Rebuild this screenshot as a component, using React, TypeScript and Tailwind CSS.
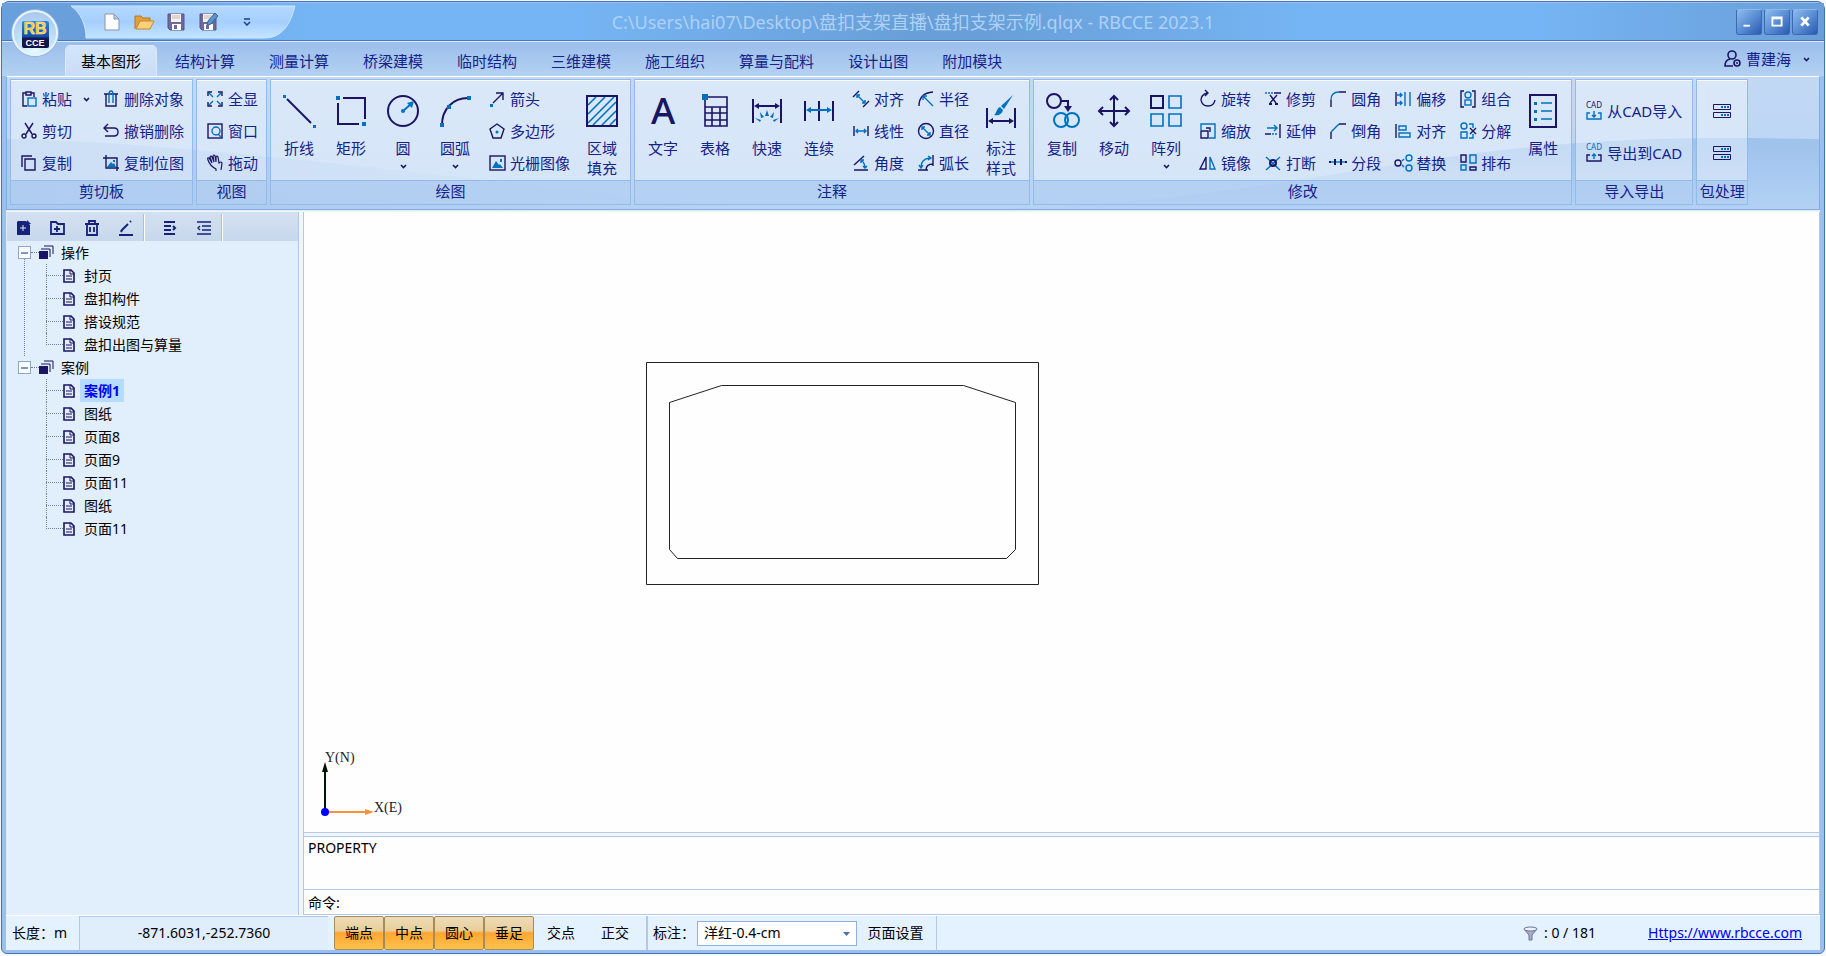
import React, { useState } from 'react';
import type { FC, ReactNode } from 'react';

const D = '#1b1464';
const B = '#0071c1';

// 32x32 drawings for the tall ribbon buttons
const bigIcons: Record<string, ReactNode> = {
  polyline: (
    <>
      <path d="M4 4 28 28" stroke={D} strokeWidth="2" />
      <path d="M0 0h3v3H0zM30 30h3v3h-3z" fill={B} />
    </>
  ),
  rect: (
    <>
      <path d="M8 3H30V24M3 8V29H24" stroke={D} strokeWidth="2" />
      <path d="M1 1h4v4H1zM27 27h4v4h-4z" fill={B} />
    </>
  ),
  circle: (
    <>
      <circle cx="16" cy="16" r="15" stroke={D} strokeWidth="2" />
      <path d="M16 16 24 9" stroke={B} strokeWidth="2" />
      <circle cx="16" cy="16" r="2" fill={B} />
      <path d="M27 6 20 8l5 5z" fill={B} />
    </>
  ),
  arc: (
    <>
      <path d="M3 30C3 14 14 3 29 3" stroke={D} strokeWidth="2" />
      <path d="M1 28h4v4H1zM8 10h4v4H8zM28 1h4v4h-4z" fill={B} />
    </>
  ),
  hatch: (
    <>
      <path d="M2 10 10 2M2 19 19 2M2 28 28 2M7 30 30 7M16 30 30 16M24 30 30 24" stroke={B} strokeWidth="1.6" />
      <rect x="1" y="1" width="30" height="30" stroke={D} strokeWidth="2" />
    </>
  ),
  text: (
    <text x="16" y="29" textAnchor="middle" fill={D} className="font-['Noto_Sans'] text-[37px] font-medium">A</text>
  ),
  table: (
    <>
      <path d="M6 2H28V31H6ZM6 12H28M6 18H28M6 25H28M13 12V31M21 12V31" stroke={D} strokeWidth="1.6" />
      <path d="M3 -1h6v6H3z" fill={B} />
    </>
  ),
  quick: (
    <>
      <path d="M2 4V28M30 4V28M5 11H27" stroke={D} strokeWidth="2" />
      <path d="M3 11 8 8v6zM29 11 24 8v6z" fill={D} />
      <path d="M16 15 18 21H14zM9 17 13 22 10 23zM23 17 19 22 22 23zM4 23 10 25 9 27zM28 23 22 25 23 27z" fill={B} />
    </>
  ),
  continuous: (
    <>
      <path d="M2 6V26M16 6V26M30 6V26" stroke={D} strokeWidth="2" />
      <path d="M5 15H27" stroke={B} strokeWidth="2" />
      <path d="M3 15 8 12v6zM29 15 24 12v6z" fill={B} />
    </>
  ),
  dimStyle: (
    <>
      <path d="M2 13V33M30 13V33M5 26H27" stroke={D} strokeWidth="2" />
      <path d="M3 26 8 23v6zM29 26 24 23v6z" fill={D} />
      <path d="M28 0 16 11 19 14zM15 12 18 15C17 19 14 21 9 20 12 18 11 14 15 12z" fill={B} />
    </>
  ),
  copy: (
    <>
      <circle cx="8" cy="6" r="7" stroke={D} strokeWidth="2" />
      <path d="M15 6H22V14" stroke={D} strokeWidth="2" />
      <path d="M18 11 22 17 26 11z" fill={D} />
      <circle cx="15" cy="25" r="7" stroke={B} strokeWidth="2" />
      <circle cx="26" cy="25" r="7" stroke={B} strokeWidth="2" />
    </>
  ),
  move: (
    <path d="M16 1V31M1 16H31M12 5 16 1 20 5M12 27 16 31 20 27M5 12 1 16 5 20M27 12 31 16 27 20" stroke={D} strokeWidth="2" />
  ),
  array: (
    <>
      <rect x="1" y="1" width="12" height="12" stroke={D} strokeWidth="2" />
      <path d="M19 1H31V13H19ZM1 19H13V31H1ZM19 19H31V31H19Z" stroke={B} strokeWidth="1.6" />
    </>
  ),
  props: (
    <>
      <rect x="3" y="0" width="26" height="32" stroke={D} strokeWidth="2" />
      <path d="M14 8H25M14 16H25M14 24H25" stroke={B} strokeWidth="1.6" />
      <path d="M7 7h3v3H7zM7 15h3v3H7zM7 23h3v3H7z" fill={B} />
    </>
  ),
};

// 16x16 drawings for the small ribbon buttons
const smallIcons: Record<string, ReactNode> = {
  paste: (
    <>
      <path d="M5 2H2V15H6M10 2H13V6M5 1H10V4H5Z" stroke={D} />
      <rect x="7" y="7" width="8" height="8" stroke={B} />
    </>
  ),
  cut: (
    <>
      <path d="M4 0 11 11M12 0 5 11" stroke={D} />
      <circle cx="3" cy="13" r="2" stroke={D} />
      <circle cx="13" cy="13" r="2" stroke={D} />
    </>
  ),
  copy: <path d="M4 4H14V15H4ZM1 12V1H11" stroke={D} />,
  trash: (
    <>
      <path d="M1 3H15M3 3V15H13V3" stroke={D} />
      <path d="M6 12V3Q6 0 8 0 10 0 10 3V12" stroke={B} />
    </>
  ),
  undo: <path d="M5 1 1 5 5 9M1 5H11Q15 5 15 9 15 13 11 13H2" stroke={D} />,
  bitmap: (
    <>
      <path d="M3 0V13H16M0 3H14V16" stroke={D} />
      <path d="M4 12 8 7 10 9 11 8 13 12zM10 5h2v2h-2z" fill={B} />
    </>
  ),
  fullView: (
    <>
      <path d="M1 5V1H5M15 11V15H11M15 5V1H11M1 11V15H5" stroke={D} />
      <path d="M2 2 6 6M14 14 10 10M14 2 10 6M2 14 6 10" stroke={B} />
    </>
  ),
  window: (
    <>
      <rect x="1" y="1" width="14" height="14" stroke={D} />
      <circle cx="9" cy="8" r="4" stroke={B} />
      <path d="M11 11 14 14" stroke={B} />
    </>
  ),
  hand: (
    <path d="M9 16V14Q3 11 1 5 0 2 2 3L5 8 3 2Q4 0 5 2L7 7 6 1Q7 -1 8 1L9 7 9 2Q10 0 11 2L12 8Q14 6 15 8L14 15" stroke={D} strokeWidth="1.2" />
  ),
  arrow: (
    <>
      <path d="M4 12 14 2M7 2H14V9" stroke={D} />
      <path d="M1 13h3v3H1z" fill={B} />
    </>
  ),
  polygon: (
    <>
      <path d="M8 1 15 6 12 15H4L1 6Z" stroke={D} />
      <circle cx="8" cy="9" r="1.5" fill={B} />
    </>
  ),
  raster: (
    <>
      <rect x="1" y="1" width="15" height="14" stroke={D} />
      <path d="M3 13 7 6 10 10 11 9 14 13zM11 4h2v3h-2z" fill={B} />
    </>
  ),
  aligned: (
    <>
      <path d="M0 6 6 0M10 16 16 10" stroke={D} />
      <path d="M4 4 12 12M4 7V4H7M12 9V12H9" stroke={B} />
    </>
  ),
  linear: (
    <>
      <path d="M1 3V13M15 3V13" stroke={D} />
      <path d="M3 8H13M5 6 3 8 5 10M11 6 13 8 11 10" stroke={B} />
    </>
  ),
  angle: (
    <>
      <path d="M1 10 11 1M1 15H15" stroke={D} />
      <path d="M8 5Q12 8 12 13M8 8V5H11M10 11 12 13 14 11" stroke={B} />
    </>
  ),
  radius: (
    <>
      <path d="M1 15Q1 2 15 1" stroke={D} />
      <path d="M5 5 15 15M5 9V5H9" stroke={B} />
    </>
  ),
  diameter: (
    <>
      <circle cx="8" cy="8" r="7.5" stroke={D} />
      <path d="M4 4 12 12M4 7V4H7M12 9V12H9" stroke={B} />
    </>
  ),
  arcLen: (
    <>
      <path d="M0 15H6M6 15H10M8 15Q8 9 15 9M15 0V11" stroke={D} />
      <path d="M3 12Q3 4 12 3M1 10 3 13 5 10M10 1 13 3 10 5" stroke={B} />
    </>
  ),
  rotate: <path d="M7 2Q1 4 1 9 2 15 8 15 14 15 15 9M5 -1 8 2 5 5" stroke={D} />,
  scale: (
    <>
      <path d="M1 7V1H15V15H9" stroke={B} />
      <path d="M1 8H8V15H1ZM6 5H10V9" stroke={D} />
    </>
  ),
  mirror: (
    <>
      <path d="M6 2V14H0Z" stroke={D} />
      <path d="M10 2V14H15Z" stroke={B} />
    </>
  ),
  trim: (
    <>
      <path d="M0 2H8" stroke={B} strokeDasharray="2 1" />
      <path d="M9 2H16M5 4 11 12M12 4 5 12" stroke={D} />
      <path d="M4 12h3v2H4zM10 12h3v2h-3z" fill={D} />
    </>
  ),
  extend: (
    <>
      <path d="M15 1V15M0 11H6" stroke={D} />
      <path d="M2 5H12M9 2 12 5 9 8" stroke={B} />
      <path d="M7 11H13" stroke={B} strokeDasharray="2 1" />
    </>
  ),
  breakIt: (
    <>
      <path d="M1 2 15 15M15 2 1 15" stroke={B} />
      <circle cx="8" cy="8" r="3" stroke={D} strokeWidth="2" />
    </>
  ),
  fillet: (
    <>
      <path d="M1 9Q1 1 9 1" stroke={B} />
      <path d="M1 9V16M9 1H16" stroke={D} />
    </>
  ),
  chamfer: (
    <>
      <path d="M1 9 9 1" stroke={B} />
      <path d="M1 9V16M9 1H16" stroke={D} />
    </>
  ),
  segment: (
    <>
      <path d="M1 7H15" stroke={B} />
      <path d="M-1 7H1M5 4V10M11 4V10M15 7H17" stroke={D} strokeWidth="2" />
    </>
  ),
  offset: (
    <>
      <path d="M1 1V15" stroke={D} />
      <path d="M10 1V15M15 1V15M2 4H7M5 2 7 4 5 6M2 12H7M5 10 7 12 5 14" stroke={B} />
    </>
  ),
  align: (
    <>
      <path d="M1 1V15" stroke={D} />
      <path d="M4 3H11V7H4ZM4 10H15V14H4Z" stroke={B} />
    </>
  ),
  replace: (
    <>
      <circle cx="3" cy="8" r="3" stroke={D} />
      <circle cx="14" cy="3" r="3" stroke={B} />
      <circle cx="14" cy="13" r="3" stroke={B} />
      <path d="M7 6 9 4M7 10 9 12" stroke={B} />
    </>
  ),
  group: (
    <>
      <path d="M4 0H1V16H4M12 0H15V16H12" stroke={D} />
      <circle cx="8" cy="4" r="3" stroke={B} />
      <rect x="5" y="9" width="6" height="5" stroke={B} />
    </>
  ),
  ungroup: (
    <>
      <circle cx="4" cy="3" r="3" stroke={B} />
      <path d="M1 9H7V15H1ZM9 1H13V5M9 15H13V11" stroke={B} />
      <path d="M10 5 16 11M16 5 10 11" stroke={D} />
    </>
  ),
  arrange: (
    <>
      <path d="M1 0H6V7H1ZM10 12H16V15H10Z" stroke={D} />
      <path d="M10 0H16V8H10ZM1 10H6V15H1Z" stroke={B} />
    </>
  ),
  cadIn: (
    <>
      <text x="8" y="5" textAnchor="middle" fill={D} className="font-['Noto_Sans'] text-[8px]">CAD</text>
      <path d="M4 10H1V16H15V10H12M8 8V14M6 12 8 14 10 12" stroke={B} />
    </>
  ),
  cadOut: (
    <>
      <text x="8" y="5" textAnchor="middle" fill={B} className="font-['Noto_Sans'] text-[8px]">CAD</text>
      <path d="M4 10H1V16H15V10H12" stroke={D} />
      <path d="M8 14V9M6 11 8 9 10 11" stroke={B} />
    </>
  ),
  pack: (
    <>
      <path d="M0.5 1.5H17.5V6.5H0.5ZM0.5 9.5H17.5V14.5H0.5Z" stroke={D} strokeWidth="1" />
      <path d="M8 3h2v2H8zM11 3h2v2h-2zM14 3h2v2h-2zM8 11h2v2H8zM11 11h2v2h-2zM14 11h2v2h-2z" fill={B} />
    </>
  ),
};

const Chevron: FC = () => (
  <svg width="7" height="5" viewBox="0 0 7 5" fill="none" className="shrink-0">
    <path d="M1 1 3.5 3.5 6 1" stroke={D} strokeWidth="1.6" />
  </svg>
);

const BigButton: FC<{ icon: string; label: string; label2?: string; menu?: boolean }> = ({ icon, label, label2, menu }) => (
  <button className="flex w-[52px] flex-col items-center pt-[14px]">
    <svg width="32" height="32" viewBox="0 0 32 32" fill="none" className="mb-[11px] overflow-visible">{bigIcons[icon]}</svg>
    <span className="leading-5">{label}</span>
    {label2 && <span className="leading-5">{label2}</span>}
    {menu && <span className="pt-1.5"><Chevron /></span>}
  </button>
);

const SmallButton: FC<{ icon: string; label: string; menu?: boolean }> = ({ icon, label, menu }) => (
  <button className="flex h-8 items-center gap-[5px] whitespace-nowrap">
    <svg width="16" height="16" viewBox="0 0 16 16" fill="none" strokeWidth="1.4" className="shrink-0 overflow-visible">{smallIcons[icon]}</svg>
    <span>{label}</span>
    {menu && <span className="ml-1.5"><Chevron /></span>}
  </button>
);

const Columns: FC<{ columns: [string, string][][] }> = ({ columns }) => (
  <div className="flex gap-3.5 pt-0.5 pr-1.5 pl-2">
    {columns.map((col, i) => (
      <div key={i} className="flex flex-col">
        {col.map(([icon, label]) => <SmallButton key={label} icon={icon} label={label} />)}
      </div>
    ))}
  </div>
);

const Group: FC<{ title: string; className?: string; children: ReactNode }> = ({ title, className = '', children }) => (
  <section className="flex h-[126px] flex-col border border-[#93bae9] bg-white/40">
    <div className={`flex h-[100px] border-t border-white/80 ${className}`}>{children}</div>
    <h2 className="flex-1 border-t border-[#93bae9] bg-[#8db8ea]/45 text-center leading-[21px] whitespace-nowrap">{title}</h2>
  </section>
);

const tabs = ['基本图形', '结构计算', '测量计算', '桥梁建模', '临时结构', '三维建模', '施工组织', '算量与配料', '设计出图', '附加模块'];

const tree = [
  { name: '操作', pages: ['封页', '盘扣构件', '搭设规范', '盘扣出图与算量'] },
  { name: '案例', pages: ['案例1', '图纸', '页面8', '页面9', '页面11', '图纸', '页面11'] },
];

const Logo: FC = () => (
  <button aria-label="RBCCE" className="absolute top-1.5 left-2 z-10">
    <svg width="50" height="50" viewBox="0 0 50 50">
      <defs>
        <radialGradient id="orb" cx="50%" cy="85%" r="85%">
          <stop offset="0" stopColor="#e6fbff" />
          <stop offset="0.5" stopColor="#bfe0fb" />
          <stop offset="1" stopColor="#a5c4ea" />
        </radialGradient>
        <linearGradient id="badge" x1="0" y1="0" x2="0" y2="1">
          <stop offset="0" stopColor="#2a86dd" />
          <stop offset="0.6" stopColor="#0f4da0" />
          <stop offset="0.62" stopColor="#191a55" />
          <stop offset="1" stopColor="#111246" />
        </linearGradient>
      </defs>
      <circle cx="25" cy="25" r="23.5" fill="url(#orb)" stroke="#8fb3df" />
      <circle cx="25" cy="25" r="22" fill="none" stroke="#e8f4ff" strokeWidth="2" />
      <rect x="12" y="13" width="27" height="27" rx="2" fill="url(#badge)" />
      <text x="25" y="26" textAnchor="middle" fill="#ffc425" stroke="#fff3cf" strokeWidth="0.5" className="font-['Liberation_Sans'] text-[16px] font-bold">RB</text>
      <text x="25" y="38" textAnchor="middle" fill="#ffffff" className="font-['Liberation_Sans'] text-[9px] font-bold">CCE</text>
    </svg>
  </button>
);

const floppy = (
  <>
    <path d="M1 1H17V17H3L1 15Z" fill="#6d6a9b" stroke="#57548a" />
    <path d="M4 1h10v8H4z" fill="#f4f1ee" />
    <path d="M5 3H13M5 5H13" stroke="#c9b9a7" />
    <path d="M5 11h9v6H5z" fill="#fff" />
    <path d="M7 12h3v4H7z" fill="#6d6a9b" />
  </>
);

const quickAccess: { name: string; art: ReactNode }[] = [
  { name: '新建', art: <path d="M2 1H11L16 6V17H2ZM11 1V6H16" fill="#fdfdff" stroke="#8f93a6" /> },
  {
    name: '打开',
    art: (
      <>
        <path d="M0 16V3H6L8 5H15V8" fill="#e0a13c" stroke="#b5771e" />
        <path d="M1 16 5 8H19L15 16Z" fill="#ffd07a" stroke="#c9862a" />
      </>
    ),
  },
  { name: '保存', art: floppy },
  { name: '另存为', art: <>{floppy}<path d="M8 12 9 8 16 0 19 3 12 11Z" fill="#5b93cf" stroke="#33659f" /></> },
];

const TitleBar: FC = () => (
  <header className="relative flex h-[38px] shrink-0 items-center border-b border-[#4a74bb] bg-[#689fd8]">
    <div className="absolute inset-0 bg-[linear-gradient(to_right,#699fda_0%,#699fda_5%,#76b5f5_17%,#76b5f5_31%,#689fd8_50%,#689fd8_54%,#76b5f5_72%,#76b5f5_84%,#699ed8_100%)]" />
    <svg width="226" height="34" viewBox="0 0 226 34" className="absolute top-0.5 left-[68px]">
      <defs>
        <linearGradient id="qat" x1="0" y1="0" x2="0" y2="1">
          <stop offset="0" stopColor="#b5d9ff" />
          <stop offset="0.5" stopColor="#a5cfff" />
          <stop offset="1" stopColor="#c3e4ff" />
        </linearGradient>
      </defs>
      <path d="M1 1H225C220 20 212 33 194 33H16C16 20 11 8 1 1Z" fill="url(#qat)" stroke="#cfe6ff" />
    </svg>
    <nav className="relative flex w-[295px] shrink-0 items-center gap-3.5 pl-[101px]">
      {quickAccess.map(({ name, art }) => (
        <button key={name} aria-label={name}>
          <svg width="18" height="18" viewBox="0 0 18 18" fill="none" className="overflow-visible">{art}</svg>
        </button>
      ))}
      <button aria-label="自定义快速访问工具栏" className="ml-3">
        <svg width="8" height="8" viewBox="0 0 8 8" fill="none">
          <path d="M1 1H7M1 4 4 7 7 4" stroke="#1c3c8c" strokeWidth="1.5" />
        </svg>
      </button>
    </nav>
    <h1 className="relative flex-1 text-center text-lg whitespace-nowrap text-[#aed1f6]">
      C:\Users\hai07\Desktop\盘扣支架直播\盘扣支架示例.qlqx - RBCCE 2023.1
    </h1>
    <div className="relative flex w-[295px] shrink-0 justify-end gap-0.5 pr-1.5">
      {[
        ['最小化', 'M7 17H14'],
        ['最大化', 'M8 8H18V17H8ZM8 9H18'],
        ['关闭', 'M9 8 17 17M17 8 9 17'],
      ].map(([name, d]) => (
        <button key={name} aria-label={name} className="h-[26px] w-[26px] rounded-[3px] border border-[#3c68b4] border-t-[#8fb9ea] bg-linear-to-br from-[#8ebcf0] via-[#5b8fd4] to-[#2a59b2]">
          <svg width="24" height="24" viewBox="0 0 26 26" fill="none">
            <path d={d} stroke="#fff" strokeWidth={name === '关闭' ? 3 : 2} />
          </svg>
        </button>
      ))}
    </div>
  </header>
);

const TabRow: FC = () => {
  const [active, setActive] = useState(tabs[0]);
  return (
    <div className="flex h-[35px] shrink-0 items-end justify-between border-t border-[#dcebfb] bg-linear-to-b from-[#9abeeb] to-[#b4d1f2] px-1 text-[15px] text-[#15228a]">
      <div className="flex gap-1 pl-[60px]" role="tablist">
        {tabs.map(tab => (
          <button
            key={tab}
            role="tab"
            aria-selected={tab === active}
            onClick={() => setActive(tab)}
            className={`h-[30px] px-[15px] leading-[30px] whitespace-nowrap ${tab === active ? 'rounded-t-sm bg-linear-to-b from-[#d3e5fa] to-[#c9ddf6] text-black shadow-[0_0_0_1px_#dcebfc]' : ''}`}
          >
            {tab}
          </button>
        ))}
      </div>
      <button className="flex h-[34px] items-center gap-1 pr-2.5">
        <svg width="18" height="18" viewBox="0 0 18 18" fill="none" strokeWidth="1.6">
          <circle cx="8" cy="5" r="4" stroke={D} />
          <path d="M9 16H1Q1 10 6 9" stroke={D} />
          <circle cx="13" cy="13" r="3" stroke={D} />
          <circle cx="13" cy="13" r="1" fill={D} />
        </svg>
        <span>曹建海</span>
        <span className="ml-2"><Chevron /></span>
      </button>
    </div>
  );
};

const Ribbon: FC = () => (
  <div className="relative flex h-[134px] shrink-0 border border-[#84ace0] border-t-white bg-linear-to-b from-[#c2d9f5] to-[#b7d3f3] px-[3px] pt-0.5 text-[15px] text-[#15228a]">
    {/* glossy swoosh under the groups */}
    <svg className="absolute inset-0 h-full w-full" viewBox="0 0 1812 132" preserveAspectRatio="none">
      <defs>
        <linearGradient id="swoosh" x1="0" y1="0" x2="0" y2="1">
          <stop offset="0.1" stopColor="#94bbea" />
          <stop offset="1" stopColor="#b0d0f4" />
        </linearGradient>
        <linearGradient id="swooshFade" x1="0" y1="0" x2="1" y2="0">
          <stop offset="0" stopColor="#a3c5ee" stopOpacity="0.7" />
          <stop offset="0.6" stopColor="#a3c5ee" stopOpacity="0.3" />
          <stop offset="1" stopColor="#a3c5ee" stopOpacity="0" />
        </linearGradient>
      </defs>
      <path d="M0 62C200 66 400 98 760 132H0Z" fill="url(#swooshFade)" />
      <path d="M1000 132C1200 124 1320 96 1470 76 1600 60 1700 60 1812 62V132Z" fill="url(#swoosh)" opacity="0.7" />
    </svg>
    <div className="relative flex items-start gap-[3px]">
      <Group title="剪切板" className="gap-[13px] pt-0.5 pr-2 pl-2.5">
        <div>
          <SmallButton icon="paste" label="粘贴" menu />
          <SmallButton icon="cut" label="剪切" />
          <SmallButton icon="copy" label="复制" />
        </div>
        <div>
          <SmallButton icon="trash" label="删除对象" />
          <SmallButton icon="undo" label="撤销删除" />
          <SmallButton icon="bitmap" label="复制位图" />
        </div>
      </Group>
      <Group title="视图" className="flex-col pt-0.5 pr-2 pl-2.5">
        <SmallButton icon="fullView" label="全显" />
        <SmallButton icon="window" label="窗口" />
        <SmallButton icon="hand" label="拖动" />
      </Group>
      <Group title="绘图" className="px-0.5">
        <BigButton icon="polyline" label="折线" />
        <BigButton icon="rect" label="矩形" />
        <BigButton icon="circle" label="圆" menu />
        <BigButton icon="arc" label="圆弧" menu />
        <Columns columns={[[['arrow', '箭头'], ['polygon', '多边形'], ['raster', '光栅图像']]]} />
        <BigButton icon="hatch" label="区域" label2="填充" />
      </Group>
      <Group title="注释" className="px-0.5">
        <BigButton icon="text" label="文字" />
        <BigButton icon="table" label="表格" />
        <BigButton icon="quick" label="快速" />
        <BigButton icon="continuous" label="连续" />
        <Columns
          columns={[
            [['aligned', '对齐'], ['linear', '线性'], ['angle', '角度']],
            [['radius', '半径'], ['diameter', '直径'], ['arcLen', '弧长']],
          ]}
        />
        <BigButton icon="dimStyle" label="标注" label2="样式" />
      </Group>
      <Group title="修改" className="px-0.5">
        <BigButton icon="copy" label="复制" />
        <BigButton icon="move" label="移动" />
        <BigButton icon="array" label="阵列" menu />
        <Columns
          columns={[
            [['rotate', '旋转'], ['scale', '缩放'], ['mirror', '镜像']],
            [['trim', '修剪'], ['extend', '延伸'], ['breakIt', '打断']],
            [['fillet', '圆角'], ['chamfer', '倒角'], ['segment', '分段']],
            [['offset', '偏移'], ['align', '对齐'], ['replace', '替换']],
            [['group', '组合'], ['ungroup', '分解'], ['arrange', '排布']],
          ]}
        />
        <BigButton icon="props" label="属性" />
      </Group>
      <Group title="导入导出" className="flex-col gap-2.5 pt-[14px] pr-2.5 pl-2.5">
        <SmallButton icon="cadIn" label="从CAD导入" />
        <SmallButton icon="cadOut" label="导出到CAD" />
      </Group>
      <Group title="包处理" className="flex-col items-center gap-2.5 px-4 pt-[14px]">
        {['打包', '解包'].map(name => (
          <button key={name} aria-label={name} className="flex h-8 items-center">
            <svg width="18" height="16" viewBox="0 0 18 16" fill="none">{smallIcons.pack}</svg>
          </button>
        ))}
      </Group>
    </div>
  </div>
);

const treeTools: { name: string; art: ReactNode }[] = [
  { name: '新建页面', art: <><path d="M1 2 2 1H10L14 5V15H1Z" fill="#17227d" /><path d="M11 0 15 4H11Z" fill="#17227d" /><path d="M7 5V11M4 8H10" stroke="#dbe7f5" /></> },
  { name: '新建文件夹', art: <path d="M1 14V2H6L8 4H14V14ZM7 6V12M4 9H10" stroke="#17227d" strokeWidth="1.8" /> },
  { name: '删除', art: <path d="M1 4H15M5 3V1H11V3M3 4V15H13V4M6 7V12M10 7V12" stroke="#17227d" strokeWidth="1.8" /> },
  { name: '重命名', art: <path d="M1 15H15M3 11 10 4M12 2 13 1M3 12 4 10" stroke="#17227d" strokeWidth="2" /> },
  { name: '展开', art: <path d="M2 2H13M2 6H9M2 10H9M2 14H13M11 6 13 8 11 10" stroke="#17227d" strokeWidth="2" /> },
  { name: '折叠', art: <path d="M1 2H15M6 6H15M6 10H15M1 14H15M4 6 2 8 4 10" stroke="#17227d" strokeWidth="1.4" /> },
];

const Sidebar: FC = () => (
  <aside className="flex w-[292px] shrink-0 flex-col border-r border-[#b3c8e5] bg-[#e1eefc]">
    <div className="flex h-[29px] items-center bg-linear-to-b from-[#d3e0f0] to-[#c7d8ec] pt-0.5 pl-2">
      {treeTools.map(({ name, art }, i) => (
        <React.Fragment key={name}>
          {i === 4 && <span className="mr-4 -ml-2 h-[27px] border-l border-[#aabfdd] bg-white pr-px" />}
          <button aria-label={name} className="flex w-[34px] px-px">
            <svg width="16" height="16" viewBox="0 0 16 16" fill="none">{art}</svg>
          </button>
        </React.Fragment>
      ))}
      <span className="-ml-2 h-[27px] border-l border-[#aabfdd] bg-white pr-px" />
    </div>
    <ul className="pl-[11px] text-sm text-black">
      {tree.map((folder, f) => (
        <li key={folder.name} className="relative">
          {f === 0 && <span className="absolute top-[18px] bottom-0 left-[6px] border-l border-dotted border-[#6f7fa8]" />}
          <div className="flex h-[23px] items-center">
            <button aria-label={`折叠${folder.name}`} className="relative flex size-[13px] items-center justify-center border border-[#90a4c4] bg-[#f8fbff]">
              <span className="h-0.5 w-[7px] bg-[#7f96bd]" />
            </button>
            <span className="w-2 border-t border-dotted border-[#6f7fa8]" />
            <svg width="15" height="15" viewBox="0 0 15 15" fill="none">
              <path d="M0 6h9v8H0z" fill={D} />
              <path d="M2 4H11V12M5 1H14V9" stroke={D} />
            </svg>
            <span className="ml-[7px]">{folder.name}</span>
          </div>
          <ul className="ml-7">
            {folder.pages.map((page, i) => {
              const current = page === '案例1';
              return (
                <li key={i} className="relative flex h-[23px] items-center">
                  <span className={`absolute top-0 left-0 border-l border-dotted border-[#6f7fa8] ${i === folder.pages.length - 1 ? 'h-3' : 'h-full'}`} />
                  <span className="w-[17px] border-t border-dotted border-[#6f7fa8]" />
                  <svg width="12" height="14" viewBox="0 0 12 14" fill="none">
                    <path d="M1 1H8L11 4V13H1Z" stroke={D} strokeWidth="1.6" />
                    <path d="M7 1V5H11M3 7H9M3 10H9" stroke={D} />
                  </svg>
                  <a
                    href="#"
                    className={`ml-[5px] px-1 leading-[23px] ${current ? 'bg-[#b5dcff] font-bold text-[#0000f0]' : ''}`}
                  >
                    {page}
                  </a>
                </li>
              );
            })}
          </ul>
        </li>
      ))}
    </ul>
  </aside>
);

const Canvas: FC = () => (
  <div className="relative flex-1 overflow-hidden border-b border-[#b3c8e5] bg-[#fefefe]">
    {/* box girder section */}
    <svg width="394" height="224" viewBox="0 0 394 224" fill="none" className="absolute top-[150px] left-[342px]">
      <path d="M0.5 0.5H392.5V222.5H0.5Z" stroke="#222" />
      <path d="M75.5 23.5H317.5L369.5 40.5V187.5L360.5 196.5H31.5L23.5 187.5V40.5Z" stroke="#222" />
    </svg>
    <svg width="90" height="70" viewBox="0 0 90 70" className="absolute bottom-3 left-4">
      <path d="M5 62V16" stroke="#001400" strokeWidth="2" />
      <path d="M5 12 2 22H8Z" fill="#001400" />
      <path d="M5 62H46" stroke="#f9913b" strokeWidth="2" />
      <path d="M54 62 45 59V65Z" fill="#f9913b" />
      <circle cx="5" cy="62" r="4" fill="#0000ff" />
      <text x="5" y="12" className="fill-[#222] font-['Liberation_Serif'] text-[14px]">Y(N)</text>
      <text x="54" y="62" className="fill-[#222] font-['Liberation_Serif'] text-[14px]">X(E)</text>
    </svg>
  </div>
);

const StatusBar: FC = () => {
  const [snaps, setSnaps] = useState(['端点', '中点', '圆心', '垂足']);
  const toggle = (name: string) =>
    setSnaps(prev => (prev.includes(name) ? prev.filter(s => s !== name) : [...prev, name]));
  return (
    <footer className="flex h-[35px] shrink-0 items-center border-t border-white bg-[#e4f1fe] text-sm whitespace-nowrap text-black">
      <span className="w-[73px] pl-1.5">长度：m</span>
      <span className="mr-1.5 h-full w-[249px] border-t border-l border-[#b3c8e5] bg-[#e0edfb] text-center leading-8">-871.6031,-252.7360</span>
      {['端点', '中点', '圆心', '垂足', '交点', '正交'].map(name => {
        const on = snaps.includes(name);
        return (
          <button
            key={name}
            aria-pressed={on}
            onClick={() => toggle(name)}
            className={`h-[34px] ${on ? 'w-[50px] rounded-xs border border-[#a48d5b] bg-[linear-gradient(to_bottom,#eddcba_0%,#e8cf9a_42%,#ffa632_50%,#ffc24c_100%)]' : 'w-[54px]'}`}
          >
            {name}
          </button>
        );
      })}
      <span className="ml-1 h-full border-l-2 border-[#b3c8e5]" />
      <label htmlFor="dim-style" className="w-[49px] pl-[5px]">标注：</label>
      <div className="relative">
        <select id="dim-style" className="h-[25px] w-[160px] appearance-none border border-[#8db2e3] bg-white pl-1.5 text-sm">
          <option>洋红-0.4-cm</option>
        </select>
        <svg width="7" height="4" viewBox="0 0 7 4" className="pointer-events-none absolute top-[11px] right-[7px]">
          <path d="M0 0H7L3.5 4Z" fill="#4a6fae" />
        </svg>
      </div>
      <button className="h-full w-20 border-r border-[#b3c8e5] pr-0.5 text-center">页面设置</button>
      <span className="ml-auto flex w-[125px] items-center gap-1.5">
        <svg width="15" height="15" viewBox="0 0 15 15">
          <path d="M1 3 6 9V14H9V9L14 3Z" fill="#a7afcc" stroke="#6b7397" />
          <ellipse cx="7.5" cy="3" rx="6.5" ry="2" fill="#eef1fb" stroke="#6b7397" />
        </svg>
        : 0 / 181
      </span>
      <a href="#" className="mr-[18px] text-[#0000ee] underline">Https://www.rbcce.com</a>
    </footer>
  );
};

export default function App() {
  return (
    <div className="h-screen overflow-hidden bg-[#f4f8fd] p-px pb-0.5 font-['Noto_Sans','Noto_Sans_CJK_SC',sans-serif]" lang="zh-CN">
      <div className="relative flex h-full flex-col rounded-t-lg rounded-b-md border border-[#4a70b8] bg-[#9cc0ee] pt-px">
        <Logo />
        <TitleBar />
        <TabRow />
        <div className="flex min-h-0 flex-1 flex-col px-1 pb-[3px]">
          <Ribbon />
          <div className="flex min-h-0 flex-1 border-t border-l border-[#dfeafa] bg-[#eef5fd] pt-px">
            <Sidebar />
            <main className="ml-1 flex min-w-0 flex-1 flex-col border-r border-l border-[#b3c8e5]">
              <Canvas />
              <div className="mt-[3px] h-[54px] border-t border-b border-[#b3c8e5] bg-[#fefefe] px-1 pt-px text-sm text-black">PROPERTY</div>
              <div className="flex h-[25px] items-center border-b border-[#b3c8e5] bg-[#fefefe] px-1 pt-0.5 text-sm text-black">
                <label htmlFor="command">命令:</label>
                <input id="command" className="ml-1 flex-1 outline-none" />
              </div>
            </main>
          </div>
          <StatusBar />
        </div>
      </div>
    </div>
  );
}
